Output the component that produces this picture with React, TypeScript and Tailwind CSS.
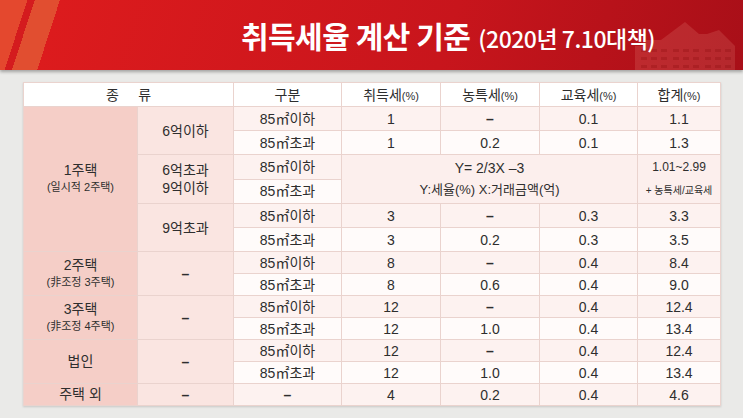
import type { ReactNode } from "react";

const FONT = { fontFamily: '"Liberation Sans", "Noto Sans CJK KR", sans-serif' };

type Row = {
  kind?: { main: string; sub?: string; span: number };
  price?: { label: ReactNode; span: number };
  area: string;
  vals?: string[];
};

const rows: Row[] = [
  { kind: { main: "1주택", sub: "(일시적 2주택)", span: 6 }, price: { label: "6억이하", span: 2 }, area: "85㎡이하", vals: ["1", "–", "0.1", "1.1"] },
  { area: "85㎡초과", vals: ["1", "0.2", "0.1", "1.3"] },
  { price: { label: <>6억초과<br />9억이하</>, span: 2 }, area: "85㎡이하" },
  { area: "85㎡초과" },
  { price: { label: "9억초과", span: 2 }, area: "85㎡이하", vals: ["3", "–", "0.3", "3.3"] },
  { area: "85㎡초과", vals: ["3", "0.2", "0.3", "3.5"] },
  { kind: { main: "2주택", sub: "(非조정 3주택)", span: 2 }, price: { label: "–", span: 2 }, area: "85㎡이하", vals: ["8", "–", "0.4", "8.4"] },
  { area: "85㎡초과", vals: ["8", "0.6", "0.4", "9.0"] },
  { kind: { main: "3주택", sub: "(非조정 4주택)", span: 2 }, price: { label: "–", span: 2 }, area: "85㎡이하", vals: ["12", "–", "0.4", "12.4"] },
  { area: "85㎡초과", vals: ["12", "1.0", "0.4", "13.4"] },
  { kind: { main: "법인", span: 2 }, price: { label: "–", span: 2 }, area: "85㎡이하", vals: ["12", "–", "0.4", "12.4"] },
  { area: "85㎡초과", vals: ["12", "1.0", "0.4", "13.4"] },
  { kind: { main: "주택 외", span: 1 }, price: { label: "–", span: 1 }, area: "–", vals: ["4", "0.2", "0.4", "4.6"] },
];

function Building() {
  return (
    <svg viewBox="0 0 100 48" className="absolute right-[8px] bottom-0 h-[48px] w-[100px]" fill="rgba(255,190,170,0.15)">
      <path d="M0 48 V24 L8 24 L8 18 L26 18 L50 0 L64 12 L72 12 L84 8 L100 24 V48 Z" />
      <g fill="rgba(120,0,0,0.2)">
        {[6, 16, 26, 38, 48, 58, 70, 80, 90].map((x) =>
          [27, 35, 43].map((y) => <rect key={`${x}-${y}`} x={x} y={y} width="6" height="3" />)
        )}
      </g>
    </svg>
  );
}

function Head({ t }: { t: string }) {
  return (
    <>
      {t}
      <span className="text-[11px]">(%)</span>
    </>
  );
}

function Val({ v }: { v: string }) {
  return v === "–" ? <span className="font-bold">–</span> : <>{v}</>;
}

export default function App() {
  const line = "border border-[#ead3ce] p-0";
  return (
    <div className="h-[418px] w-[743px] overflow-hidden bg-[#eaeae8]" style={FONT}>
      <div className="relative flex h-[70px] items-center justify-end pr-[88px] shadow-[0_2px_3px_rgba(0,0,0,0.3)] bg-[linear-gradient(108deg,#e4482e_0px,#e4482e_26px,#d41b1e_26px,#d41b1e_33px,#e14e30_33px,#e14e30_57px,#dc1b1d_57px,#c8151c_60%,#a80f18_100%)]">
        <Building />
        <h1
          className="relative flex items-baseline gap-[8px] text-white"
          style={{ fontFamily: '"Noto Sans CJK KR", sans-serif' }}
        >
          <span className="text-[30px] font-bold tracking-[-0.5px]">취득세율 계산 기준</span>
          <span className="text-[23px] font-medium tracking-[-0.5px]">(2020년 7.10대책)</span>
        </h1>
      </div>

      <div className="px-[23px] pt-[12px]">
        <table className="w-[697px] table-fixed border-collapse border-[1.5px] border-[#d8a79e] text-center text-[14px] leading-none text-[#2e2e2e] shadow-[0_1px_2px_rgba(0,0,0,0.15)]">
          <colgroup>
            <col className="w-[114px]" />
            <col className="w-[96px]" />
            <col className="w-[108px]" />
            <col className="w-[99px]" />
            <col className="w-[99px]" />
            <col className="w-[98px]" />
            <col className="w-[83px]" />
          </colgroup>
          <thead>
            <tr className="h-[24px] bg-white">
              <th colSpan={2} className={`${line} font-normal`}>
                종&nbsp;&nbsp;&nbsp;&nbsp;&nbsp;류
              </th>
              <th className={`${line} font-normal`}>구분</th>
              <th className={`${line} font-normal`}><Head t="취득세" /></th>
              <th className={`${line} font-normal`}><Head t="농특세" /></th>
              <th className={`${line} font-normal`}><Head t="교육세" /></th>
              <th className={`${line} font-normal`}><Head t="합계" /></th>
            </tr>
          </thead>
          <tbody>
            {rows.map((r, i) => {
              const tint = i % 2 === 0 ? "bg-[#fdf2f0]" : "bg-[#fffbfa]";
              return (
                <tr key={i} className={i < 6 ? "h-[24px]" : "h-[22px]"}>
                  {r.kind && (
                    <td rowSpan={r.kind.span} className={`${line} bg-[#f5cec7] leading-[17px]`}>
                      <div>{r.kind.main}</div>
                      {r.kind.sub && <div className="text-[11px]">{r.kind.sub}</div>}
                    </td>
                  )}
                  {r.price && (
                    <td rowSpan={r.price.span} className={`${line} bg-[#fae5e1] leading-[18px]`}>
                      <Val v={r.price.label as string} />
                    </td>
                  )}
                  <td className={`${line} ${tint}`}>
                    <Val v={r.area} />
                  </td>
                  {r.vals
                    ? r.vals.map((v, j) => (
                        <td key={j} className={`${line} ${tint}`}>
                          <Val v={v} />
                        </td>
                      ))
                    : i === 2 && (
                        <>
                          <td colSpan={3} rowSpan={2} className={`${line} bg-[#fcefed] leading-[22px]`}>
                            <div>Y= 2/3X –3</div>
                            <div className="text-[13px]">Y:세율(%) X:거래금액(억)</div>
                          </td>
                          <td rowSpan={2} className={`${line} bg-[#fcefed] leading-[24px]`}>
                            <div className="text-[12px]">1.01~2.99</div>
                            <div className="text-[10px]">+ 농특세/교육세</div>
                          </td>
                        </>
                      )}
                </tr>
              );
            })}
          </tbody>
        </table>
      </div>
    </div>
  );
}
